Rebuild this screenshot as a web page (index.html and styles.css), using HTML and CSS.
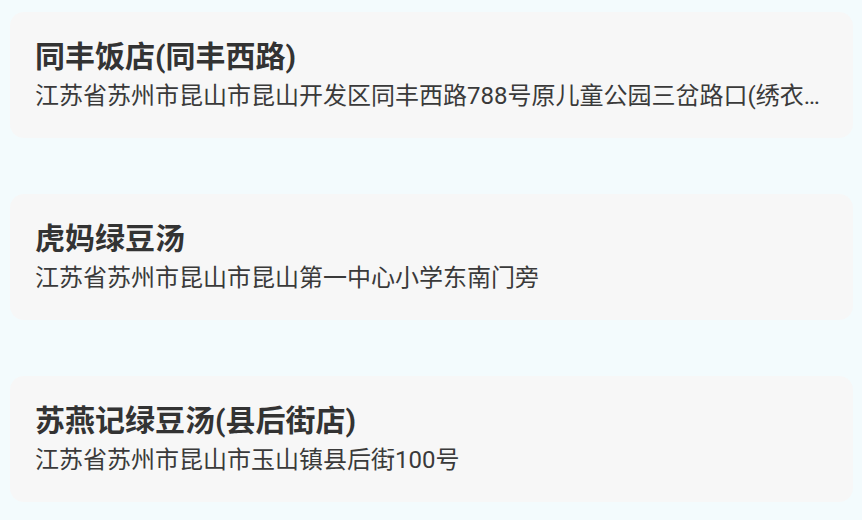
FILE: index.html
```html
<!DOCTYPE html>
<html lang="zh-CN">
<head>
<meta charset="utf-8">
<title>附近店铺</title>
<link rel="stylesheet" href="styles.css">
</head>
<body>
  <ul class="shop-list">
    <li class="shop-card">
      <div class="shop-name">同丰饭店(同丰西路)</div>
      <div class="shop-addr">江苏省苏州市昆山市昆山开发区同丰西路788号原儿童公园三岔路口(绣衣坊对面)</div>
    </li>
    <li class="shop-card">
      <div class="shop-name">虎妈绿豆汤</div>
      <div class="shop-addr">江苏省苏州市昆山市昆山第一中心小学东南门旁</div>
    </li>
    <li class="shop-card">
      <div class="shop-name">苏燕记绿豆汤(县后街店)</div>
      <div class="shop-addr">江苏省苏州市昆山市玉山镇县后街100号</div>
    </li>
  </ul>
</body>
</html>
```

FILE: styles.css
```css
html, body {
  margin: 0;
  padding: 0;
  background: #f3fbfd;
}

body {
  font-family: Roboto, "Noto Sans CJK SC", sans-serif;
  color: #333333;
}

.shop-list {
  list-style: none;
  margin: 0;
  padding: 12px 9px 0 10px;
  display: flex;
  flex-direction: column;
  gap: 56px;
}

.shop-card {
  background: #f7f7f7;
  border-radius: 14px;
  padding: 24px 25px 23px 25px;
  min-width: 0;
}

.shop-name {
  font-size: 30px;
  line-height: 42px;
  font-weight: 700;
  color: #333333;
  white-space: nowrap;
  overflow: hidden;
  text-overflow: ellipsis;
}

.shop-addr {
  margin-top: 0;
  font-size: 24px;
  line-height: 37px;
  font-weight: 400;
  color: #3a3a3a;
  white-space: nowrap;
  overflow: hidden;
  text-overflow: ellipsis;
}
```
